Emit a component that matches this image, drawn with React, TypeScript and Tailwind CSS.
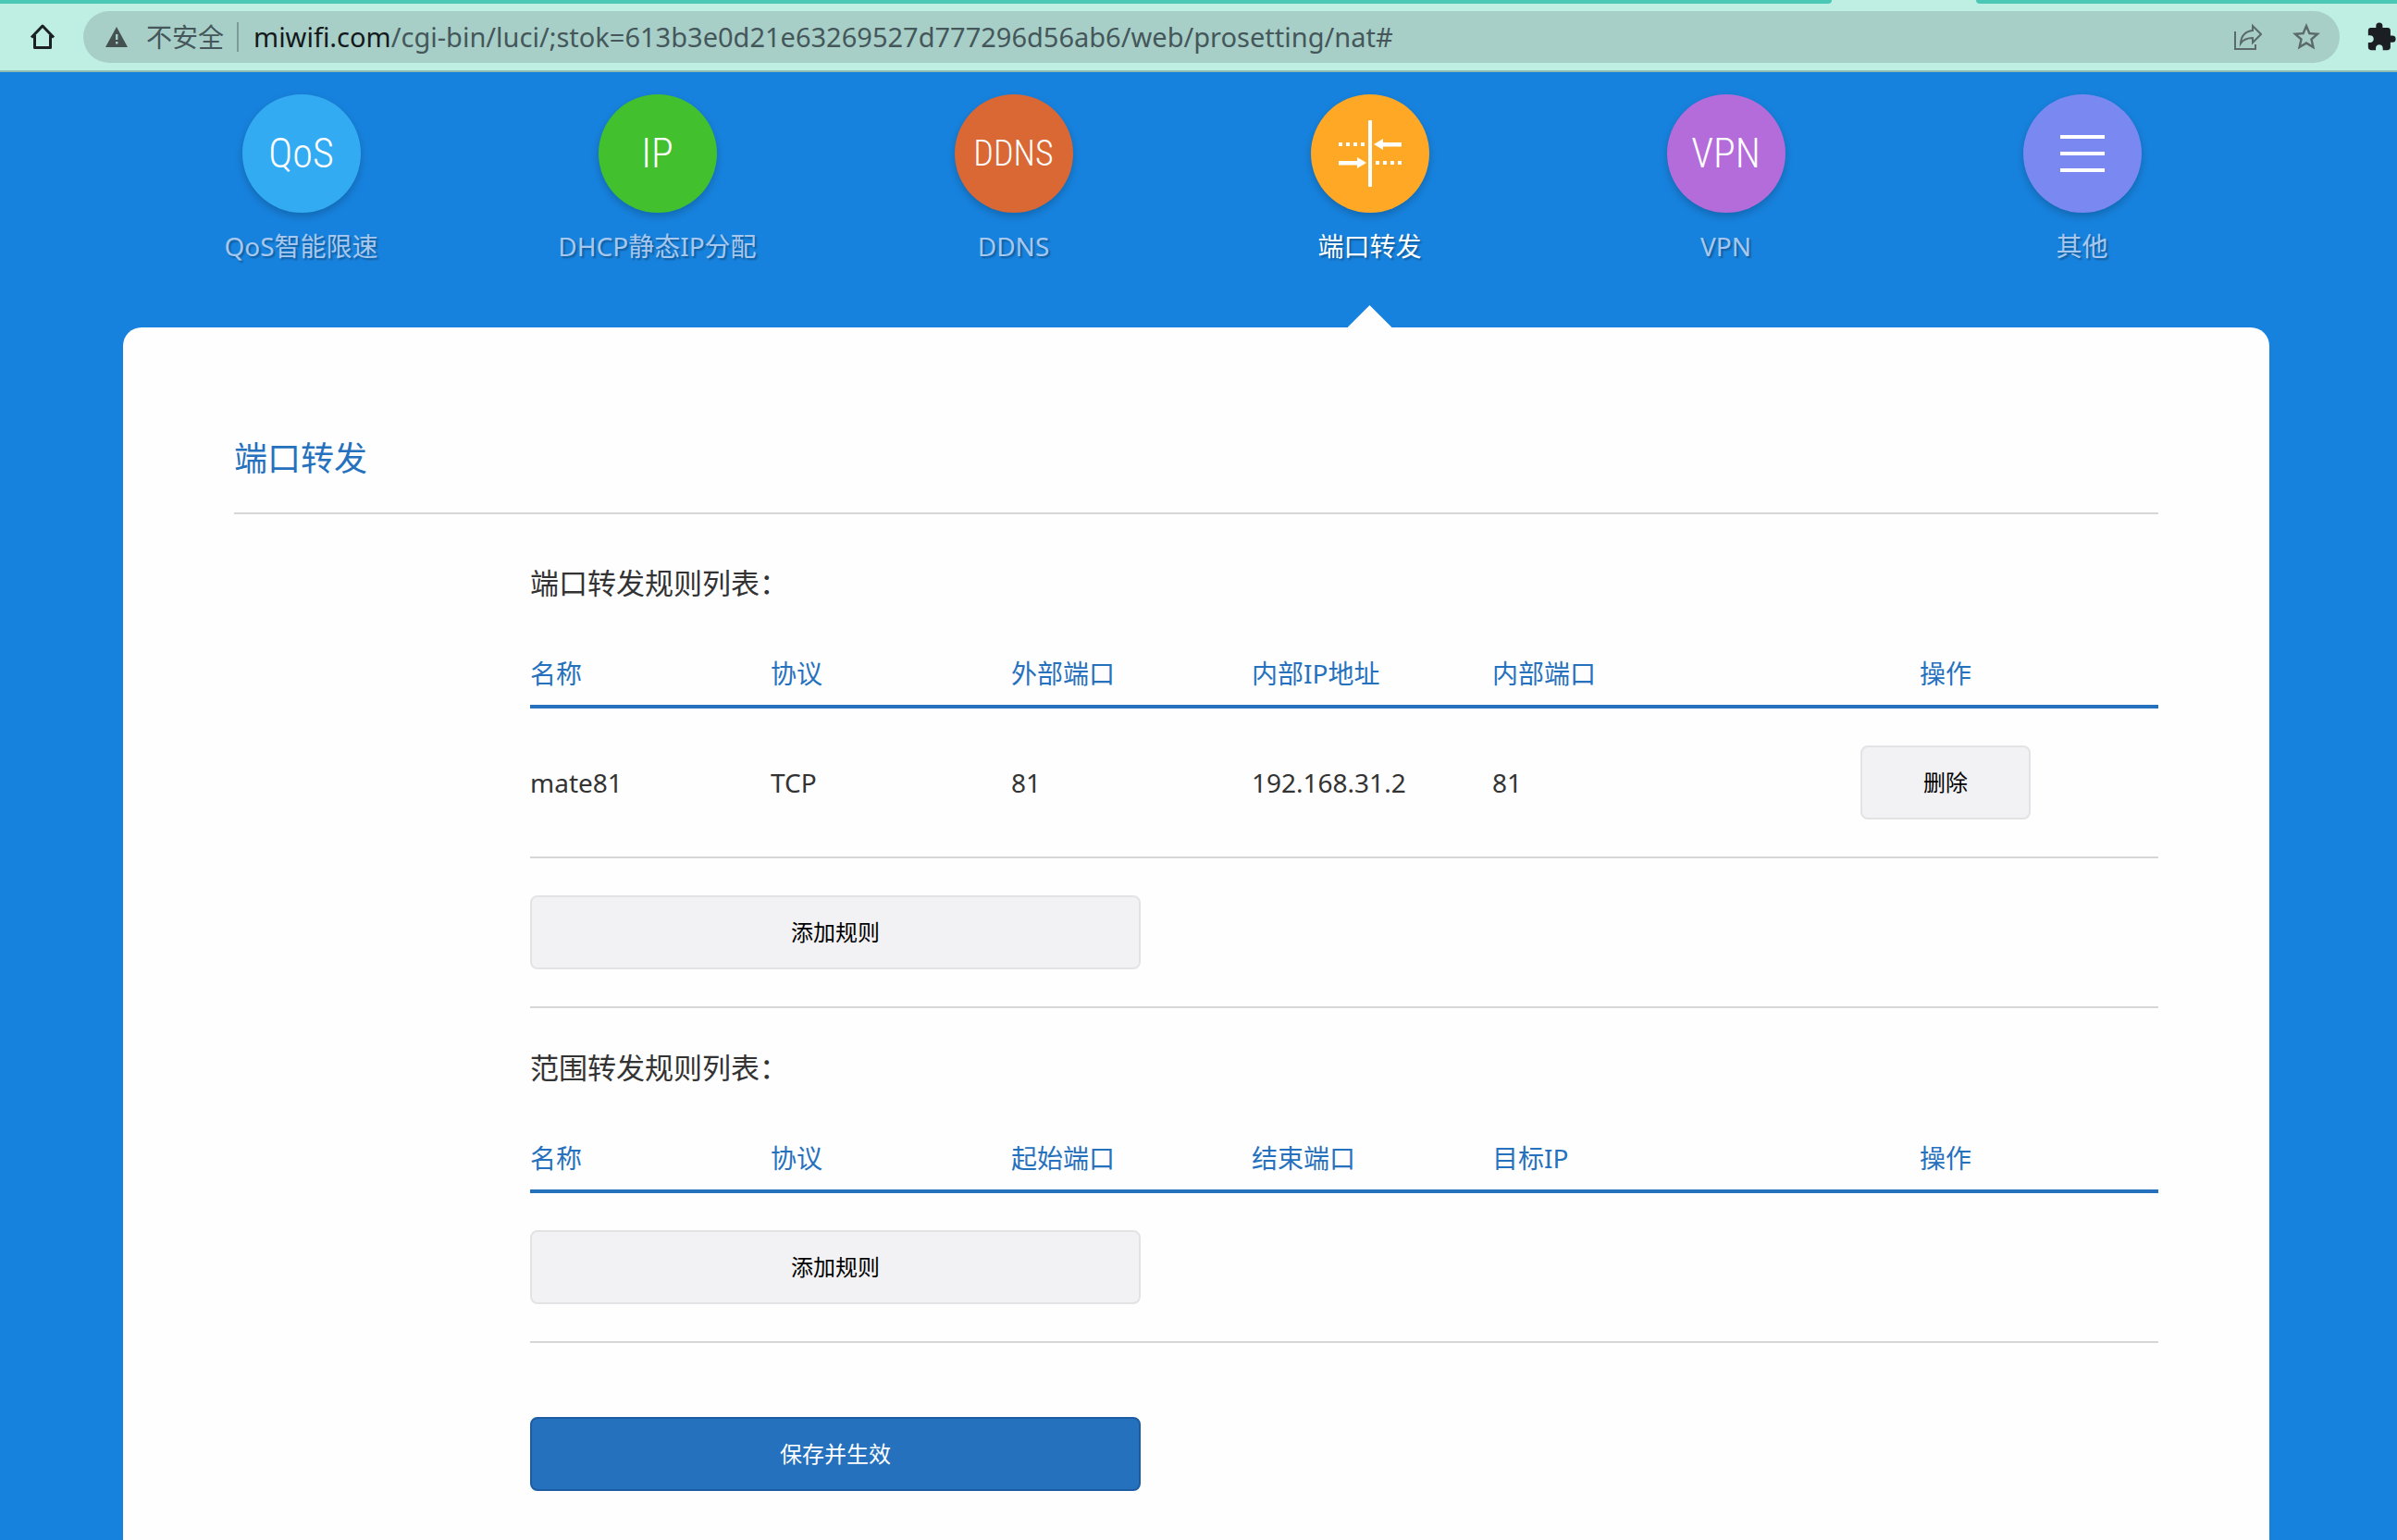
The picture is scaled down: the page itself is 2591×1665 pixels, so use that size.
import { MdExtension, MdStarBorder } from "react-icons/md";

interface NavItem {
  id: string;
  label: string;
  color: string;
  text?: string;
  textSize?: string;
}

interface Rule {
  name: string;
  protocol: string;
  from: string;
  target: string;
  to: string;
}

interface RuleSectionProps {
  title: string;
  columns: string[];
  rules: Rule[];
}

const navItems: NavItem[] = [
  { id: "qos", label: "QoS智能限速", color: "bg-[#33abf2]", text: "QoS", textSize: "text-[44px]" },
  { id: "dhcp", label: "DHCP静态IP分配", color: "bg-[#42c02e]", text: "IP", textSize: "text-[44px]" },
  { id: "ddns", label: "DDNS", color: "bg-[#d96835]", text: "DDNS", textSize: "text-[38px]" },
  { id: "nat", label: "端口转发", color: "bg-[#ffa826]" },
  { id: "vpn", label: "VPN", color: "bg-[#b36cd9]", text: "VPN", textSize: "text-[44px]" },
  { id: "other", label: "其他", color: "bg-[#7a89f2]" }
];

const portRules: Rule[] = [
  { name: "mate81", protocol: "TCP", from: "81", target: "192.168.31.2", to: "81" }
];

function HomeIcon() {
  return (
    <svg viewBox="0 0 28 28" className="h-7 w-7" fill="none" stroke="#1b2023" strokeWidth="3" strokeLinejoin="round">
      <path d="M2 14.500 14 2l12 12.500M5.500 12v13.500h17V12" />
    </svg>
  );
}

function WarningIcon() {
  return (
    <svg viewBox="0 0 24 22" className="h-[22px] w-6">
      <path d="M12 0 24 22H0z" fill="#45514f" />
      <path d="M11 8h2.400v6H11zM11 16h2.400v2.500H11z" fill="#a7cfc8" />
    </svg>
  );
}

function ShareIcon() {
  return (
    <svg viewBox="0 0 30 30" className="h-[30px] w-[30px]" fill="none" stroke="#5b6a69" strokeWidth="2">
      <path d="M1 9v19h22v-5" />
      <path d="M20 3v5c-8 1-12.500 6-13 14 3-4.500 7-6 13-6v5l9-9z" />
    </svg>
  );
}

function PortIcon() {
  return (
    <svg viewBox="0 0 128 128" className="h-32 w-32" fill="#fff">
      <rect x="62" y="28" width="4" height="72" rx="1" />
      <path d="M68 54l10-6v4h20v4.500H78V60zM60 74l-10-6v4H30v4.500h20V80z" />
      <path d="M30 52h4v4h-4zM38 52h4v4h-4zM46 52h4v4h-4zM54 52h4v4h-4z" />
      <path d="M70 72h4v4h-4zM78 72h4v4h-4zM86 72h4v4h-4zM94 72h4v4h-4z" />
    </svg>
  );
}

function MenuIcon() {
  return (
    <svg viewBox="0 0 128 128" className="h-32 w-32" fill="#fff">
      <path d="M40 44h48v4H40zM40 62h48v4H40zM40 80h48v4H40z" />
    </svg>
  );
}

function AddressBar() {
  return (
    <header className="bg-[#bfeee3]">
      {/* Tab strip edge */}
      <div className="flex h-1">
        <div className="w-[1980px] shrink rounded-br-lg bg-[#4ac8b5]"></div>
        <div className="w-[156px] shrink"></div>
        <div className="flex-1 rounded-bl-lg bg-[#4ac8b5]"></div>
      </div>
      <div className="flex h-[74px] items-center border-b-2 border-[#8fbdb3] pl-8">
        <button aria-label="主页">
          <HomeIcon />
        </button>
        <div className="ml-[30px] flex h-14 min-w-0 flex-1 items-center rounded-full bg-[#a7cfc8] pl-6 pr-[18px] text-[#45575a]">
          <WarningIcon />
          <span className="ml-5 shrink-0 text-[28px]">不安全</span>
          <span className="mx-3.5 h-8 w-0.5 bg-[#7d9c97]"></span>
          <span className="ml-0.5 flex-1 truncate text-[29px]">
            <span className="text-[#14191c]">miwifi.com</span>
            /cgi-bin/luci/;stok=613b3e0d21e63269527d777296d56ab6/web/prosetting/nat#
          </span>
          <button aria-label="分享">
            <ShareIcon />
          </button>
          <button aria-label="收藏" className="ml-[30px]">
            <MdStarBorder className="h-9 w-9 text-[#5b6a69]" />
          </button>
        </div>
        <button aria-label="扩展程序" className="ml-7">
          <MdExtension className="h-[34px] w-[34px] text-[#1b1e22]" />
        </button>
      </div>
    </header>
  );
}

function SettingsNav({ active }: { active: string }) {
  return (
    <nav className="grid grid-cols-6 pr-2.5">
      {navItems.map((item) => (
        <a
          key={item.id}
          href="#"
          className={`relative flex flex-col items-center pt-6 pb-[68px] ${item.id === active ? "text-white" : "text-[#a6c8ef]"}`}
        >
          <span
            className={`flex h-32 w-32 items-center justify-center rounded-full font-['Roboto_Condensed','Liberation_Sans_Narrow',sans-serif] font-light text-white shadow-[0_4px_8px_rgba(0,0,0,0.2)] ${item.color} ${item.textSize ?? ""}`}
          >
            {item.text}
            {item.id === "nat" && <PortIcon />}
            {item.id === "other" && <MenuIcon />}
          </span>
          <span className="mt-4 whitespace-nowrap text-[28px] leading-10 [text-shadow:2px_2px_2px_rgba(0,0,0,0.3)]">
            {item.label}
          </span>
          {item.id === active && (
            <span className="absolute bottom-0 h-6 w-12 bg-[#fefefe] [clip-path:polygon(50%_0,100%_100%,0_100%)]"></span>
          )}
        </a>
      ))}
    </nav>
  );
}

function RuleSection({ title, columns, rules }: RuleSectionProps) {
  return (
    <section className="border-b-2 border-[#d6d6d6] pt-11 pb-10">
      <h3 className="text-[31px] leading-10">{title}</h3>
      <table className="mt-10 w-full table-fixed border-separate border-spacing-0 text-left text-[28px] leading-10">
        <thead>
          <tr>
            {columns.map((column) => (
              <th
                key={column}
                className="w-[260px] border-b-4 border-[#2671bd] pt-[18px] pb-3.5 font-normal text-[#2671bd] last:w-auto last:text-center"
              >
                {column}
              </th>
            ))}
          </tr>
        </thead>
        <tbody>
          {rules.map((rule) => (
            <tr key={rule.name} className="*:border-b-2 *:border-[#d6d6d6] *:py-10">
              <td>{rule.name}</td>
              <td>{rule.protocol}</td>
              <td>{rule.from}</td>
              <td>{rule.target}</td>
              <td>{rule.to}</td>
              <td>
                <button className="mx-auto block h-20 w-[184px] rounded-lg border-2 border-[#e3e3e6] bg-[#f2f1f3] text-2xl text-black">
                  删除
                </button>
              </td>
            </tr>
          ))}
        </tbody>
      </table>
      <button className="mt-10 block h-20 w-[660px] rounded-lg border-2 border-[#e3e3e6] bg-[#f2f1f3] text-2xl text-black">
        添加规则
      </button>
    </section>
  );
}

export default function App() {
  return (
    <div className="flex min-h-screen flex-col bg-[#1782dd] font-['Noto_Sans','Noto_Sans_CJK_SC',sans-serif] text-[#333]">
      <AddressBar />

      <div className="flex flex-1 flex-col pl-[133px] pr-[138px]">
        <SettingsNav active="nat" />

        <main className="flex-1 rounded-t-[20px] bg-[#fefefe] px-[120px] pt-[120px] pb-12">
          <h2 className="border-b-2 border-[#d6d6d6] pb-9 text-[36px] leading-[44px] text-[#2671bd]">端口转发</h2>

          <div className="pt-2.5 pl-80">
            <RuleSection
              title="端口转发规则列表："
              columns={["名称", "协议", "外部端口", "内部IP地址", "内部端口", "操作"]}
              rules={portRules}
            />
            <RuleSection
              title="范围转发规则列表："
              columns={["名称", "协议", "起始端口", "结束端口", "目标IP", "操作"]}
              rules={[]}
            />
            <button className="mt-20 block h-20 w-[660px] rounded-lg border-2 border-[#1b5ca3] bg-[#2671bd] text-2xl text-white">
              保存并生效
            </button>
          </div>
        </main>
      </div>
    </div>
  );
}
